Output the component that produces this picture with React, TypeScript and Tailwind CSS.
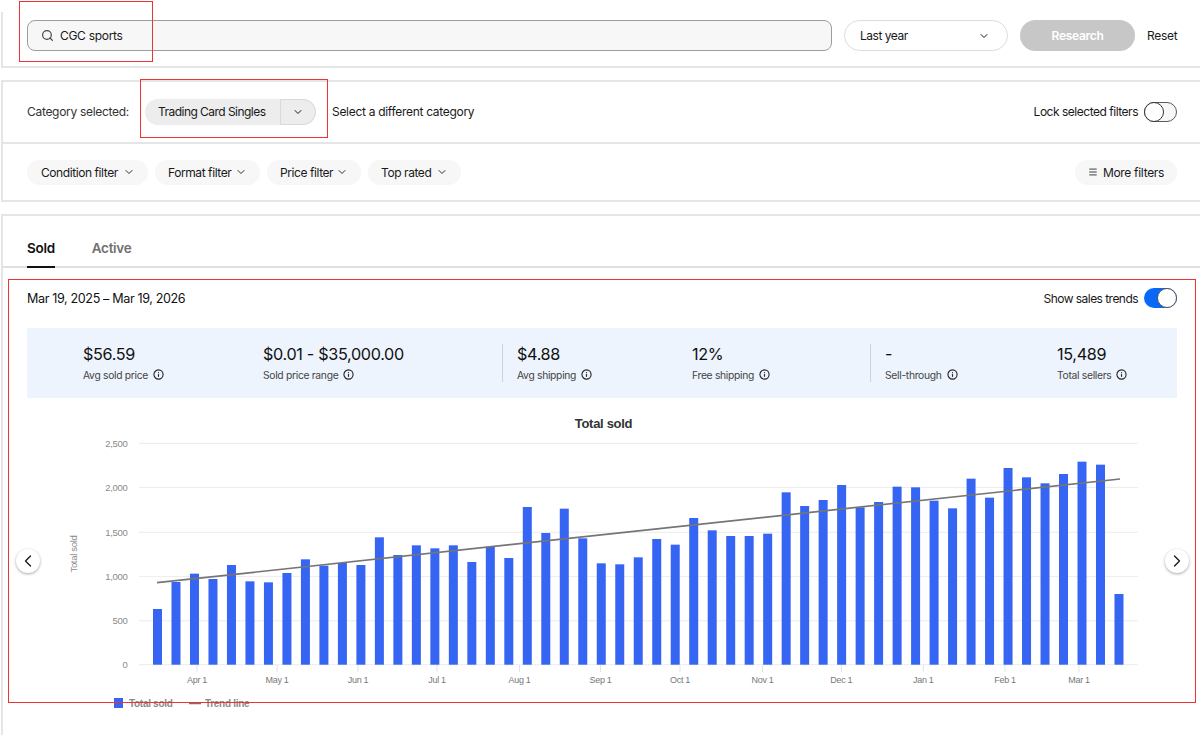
import { ChevronDown, ChevronLeft, ChevronRight, Info, Menu, Search } from 'lucide-react';

// bar tops measured from the picture, left to right (pixel y in the page)
const barTops = [
  537, 456, 431, 447, 405, 454, 457, 429, 388, 407, 399, 405, 322, 375,
  346, 355, 346, 396, 350, 384, 231, 309, 236, 325, 400, 403, 382, 327, 344, 264, 301, 318, 318, 311, 187,
  228, 210, 165, 232, 216, 170, 172, 212, 235, 146, 203, 114, 142, 160, 132, 95, 104, 492,
].map((z) => 430 + z / 3);

const BASE_Y = 664.7;
const gridLines = [
  { y: 443.3, label: '2,500' },
  { y: 487.6, label: '2,000' },
  { y: 532.3, label: '1,500' },
  { y: 576.4, label: '1,000' },
  { y: 620.8, label: '500' },
  { y: 664.7, label: '0' },
];
const months = [
  { x: 197, label: 'Apr 1' },
  { x: 277, label: 'May 1' },
  { x: 358, label: 'Jun 1' },
  { x: 437, label: 'Jul 1' },
  { x: 519.5, label: 'Aug 1' },
  { x: 600.5, label: 'Sep 1' },
  { x: 680, label: 'Oct 1' },
  { x: 762.5, label: 'Nov 1' },
  { x: 841.3, label: 'Dec 1' },
  { x: 923.3, label: 'Jan 1' },
  { x: 1005, label: 'Feb 1' },
  { x: 1079, label: 'Mar 1' },
];

function Chip({ label, className }: { label: string; className: string }) {
  return (
    <button className={`h-[25px] rounded-full bg-[#f7f7f7] flex items-center justify-between whitespace-nowrap text-[#191919] tracking-[-0.035em] ${className}`}>
      <span className="pt-px">{label}</span>
      <ChevronDown size={12} strokeWidth={1.8} />
    </button>
  );
}

function Stat({ value, label, className }: { value: string; label: string; className: string }) {
  return (
    <div className={`-mt-[2px] ${className}`}>
      <div className="text-[16.2px] leading-[22px] tracking-[-0.02em] text-[#111]">{value}</div>
      <div className="mt-[3px] flex items-center gap-[5px] text-[10.3px] leading-[14px] text-[#444]">
        {label}
        <Info size={11} strokeWidth={2.4} className="text-[#222]" />
      </div>
    </div>
  );
}

function Chart() {
  return (
    <svg viewBox="40 408 1125 305" className="w-[1125px] h-[305px] shrink-0" fontFamily="'Liberation Sans', Arial, sans-serif">
      <text x="603.5" y="428" textAnchor="middle" fontSize="13" fontWeight="700" fill="#333">Total sold</text>
      {gridLines.map((g) => (
        <g key={g.label}>
          <line x1="139" x2="1138" y1={g.y} y2={g.y} stroke="#ececec" strokeWidth="1" />
          <text x="127.5" y={g.y + 3.5} textAnchor="end" fontSize="9.5" fill="#8a8a8a">{g.label}</text>
        </g>
      ))}
      <text transform="translate(77 554) rotate(-90)" textAnchor="middle" fontSize="9.5" fill="#8a8a8a">Total sold</text>
      {barTops.map((top, i) => (
        <rect key={i} x={153 + i * 18.49} y={top} width="9" height={BASE_Y - top} fill="#3565f2" />
      ))}
      <line x1="157" y1="582.7" x2="1120" y2="479" stroke="#757575" strokeWidth="1.7" />
      {months.map((m) => (
        <g key={m.label}>
          <line x1={m.x} x2={m.x} y1="665" y2="672" stroke="#e3e3e3" />
          <text x={m.x} y="683" textAnchor="middle" fontSize="9" fill="#777">{m.label}</text>
        </g>
      ))}
      <rect x="114" y="698" width="9" height="10" fill="#3565f2" />
      <text x="129" y="707" fontSize="10" fontWeight="700" fill="#8a8a8a">Total sold</text>
      <line x1="189" x2="201" y1="703.5" y2="703.5" stroke="#757575" strokeWidth="1.5" />
      <text x="205" y="707" fontSize="10" fontWeight="700" fill="#8a8a8a">Trend line</text>
    </svg>
  );
}

function NavButton({ children }: { children: React.ReactNode }) {
  return (
    <button className="w-6 h-6 shrink-0 rounded-full bg-white shadow-[0_1px_3px_rgba(0,0,0,0.35)] flex items-center justify-center text-[#191919]">
      {children}
    </button>
  );
}

export default function App() {
  return (
    <div className="relative w-[1200px] h-[735px] overflow-hidden bg-white text-[12px] tracking-[-0.025em] text-[#191919] font-['Inter','Liberation_Sans',sans-serif]">
      <div className="pt-[12px] pl-px">
        <div className="h-[56px] border-l-2 border-b-2 border-[#e5e5e5] pl-[24px] pr-[23px] pt-[8px] flex items-start">
          <div className="flex-1 h-[31px] rounded-[8px] border border-[#9c9c9c] bg-[#f7f7f7] flex items-center pl-[13px] gap-[6px]">
            <Search size={13} strokeWidth={2.2} className="text-[#444]" />
            <span className="pt-px">CGC sports</span>
          </div>
          <button className="ml-[12px] w-[164px] h-[31px] rounded-full border border-[#dcdcdc] flex items-center justify-between pl-[15px] pr-[17px]">
            <span className="pt-px tracking-[-0.04em]">Last year</span>
            <ChevronDown size={12} strokeWidth={2} />
          </button>
          <button className="ml-[12px] w-[115px] h-[31px] rounded-full bg-[#c7c7c7] text-white font-semibold pt-px">Research</button>
          <span className="ml-[12px] w-[30px] h-[31px] pt-px flex items-center">Reset</span>
        </div>

        <div className="mt-[12px] h-[122px] border-l-2 border-t-2 border-b-2 border-[#e5e5e5]">
          <div className="h-[62px] border-b-2 border-[#e5e5e5] pl-[24px] pr-[23px] flex items-center">
            <span className="w-[118px] text-[#333]">Category selected:</span>
            <div className="h-[26px] w-[171px] rounded-full bg-[#ededed] flex items-center">
              <span className="w-[135px] pl-[13px] tracking-[-0.045em]">Trading Card Singles</span>
              <span className="flex-1 h-full rounded-r-full border border-[#d9d9d9] flex items-center justify-center">
                <ChevronDown size={12} strokeWidth={2} />
              </span>
            </div>
            <span className="ml-[16px]">Select a different category</span>
            <span className="ml-auto tracking-[-0.04em]">Lock selected filters</span>
            <span className="ml-[6px] relative w-[33px] h-[20px] rounded-full border border-[#5a5a5a] bg-[#f7f7f7]">
              <span className="absolute -left-px -top-px w-[20px] h-[20px] rounded-full border border-[#333] bg-white" />
            </span>
          </div>
          <div className="h-[56px] pl-[24px] pr-[23px] flex items-center">
            <Chip label="Condition filter" className="w-[121px] pl-[14px] pr-[13px]" />
            <Chip label="Format filter" className="ml-[7px] w-[105px] pl-[13px] pr-[13px]" />
            <Chip label="Price filter" className="ml-[7px] w-[94px] pl-[13px] pr-[13px]" />
            <Chip label="Top rated" className="ml-[7px] w-[93px] pl-[13px] pr-[13px]" />
            <button className="ml-auto h-[25px] w-[102px] rounded-full bg-[#f7f7f7] flex items-center justify-center gap-[5px]">
              <Menu size={10} strokeWidth={2} />
              <span className="pt-px">More filters</span>
            </button>
          </div>
        </div>

        <div className="mt-[12px] h-[521px] border-l-2 border-t-2 border-[#e5e5e5]">
          <div className="h-[52px] border-b-2 border-[#e0e0e0] pl-[24px] flex items-end gap-[37px] text-[13.5px] font-semibold">
            <span className="h-[38px] pt-[8px] -mb-[2px] border-b-2 border-[#111] text-[#111]">Sold</span>
            <span className="h-[38px] pt-[8px] -mb-[2px] text-[#707070]">Active</span>
          </div>
          <div className="h-[60px] pl-[24px] pr-[23px] flex items-center justify-between">
            <span className="text-[12.6px] tracking-[-0.03em] pt-[3px] text-[#111]">Mar 19, 2025 – Mar 19, 2026</span>
            <div className="flex items-center gap-[6px]">
              <span className="pt-px tracking-[-0.045em]">Show sales trends</span>
              <span className="relative w-[33px] h-[20px] rounded-full bg-[#0968f6]">
                <span className="absolute right-0 top-0 w-[20px] h-[20px] rounded-full border border-[#555] bg-white" />
              </span>
            </div>
          </div>
          <div className="ml-[24px] mr-[23px] h-[70px] bg-[#edf4fd] flex items-center">
            <div className="w-[475px] flex pl-[56px]">
              <Stat value="$56.59" label="Avg sold price" className="w-[180px]" />
              <Stat value="$0.01 - $35,000.00" label="Sold price range" className="flex-1" />
            </div>
            <div className="w-[368px] h-[38px] border-l border-[#cfd3d8] pl-[14px] flex items-center">
              <Stat value="$4.88" label="Avg shipping" className="w-[175px]" />
              <Stat value="12%" label="Free shipping" className="flex-1" />
            </div>
            <div className="flex-1 h-[38px] border-l border-[#cfd3d8] pl-[14px] flex items-center">
              <Stat value="-" label="Sell-through" className="w-[172px]" />
              <Stat value="15,489" label="Total sellers" className="flex-1" />
            </div>
          </div>
          <div className="mt-[10px] ml-[13px] flex items-center">
            <NavButton><ChevronLeft size={20} strokeWidth={1.6} /></NavButton>
            <Chart />
            <NavButton><ChevronRight size={20} strokeWidth={1.6} /></NavButton>
          </div>
        </div>
      </div>

      {/* review marks drawn over the page */}
      <div className="absolute left-[19px] top-[1px] w-[134px] h-[61px] border border-[#ee3333]" />
      <div className="absolute left-[140px] top-[79px] w-[188px] h-[59px] border border-[#ee3333]" />
      <div className="absolute left-[8px] top-[279px] w-[1188px] h-[424px] border border-[#ee3333]" />
    </div>
  );
}
